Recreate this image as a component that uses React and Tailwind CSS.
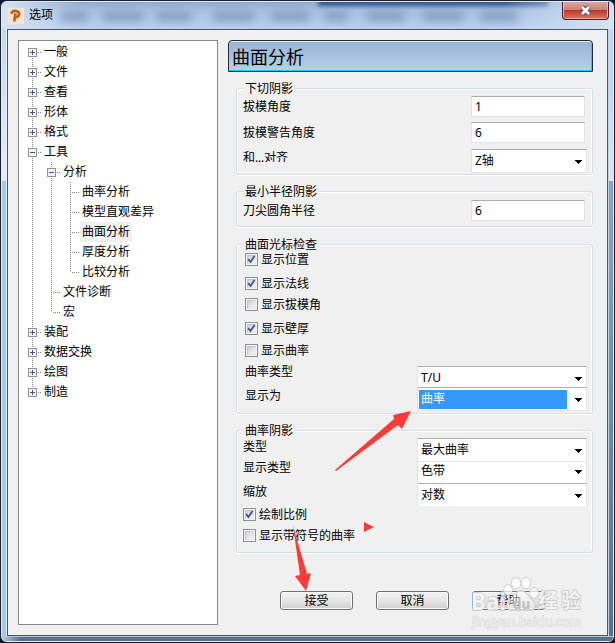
import React from "react";

function Group({ title, className, children }) {
  return (
    <section
      className={`ml-2 w-[357px] rounded-[3px] border border-[#d5dfe8] shadow-[inset_1px_1px_0_#fff,inset_-1px_0_0_#fff,0_1px_0_#fff] ${className}`}
    >
      <h2 className="-mt-2 ml-[6px] h-[15px] w-fit bg-[#f0f0f0] px-[2px] leading-[15px]">{title}</h2>
      {children}
    </section>
  );
}

function Label({ className, children }) {
  return <div className={`h-4 leading-4 ${className || ""}`}>{children}</div>;
}

function Field({ value, className }) {
  return (
    <div
      className={`flex h-[21px] w-[114px] shrink-0 items-center rounded-[1px] border border-[#e2e3ea] border-t-[#abadb3] bg-white pl-[3px] ${className || ""}`}
    >
      {value}
    </div>
  );
}

function Combo({ value, selected, className }) {
  return (
    <div
      className={`flex shrink-0 items-center justify-between border border-[#e2e3ea] border-t-[#abadb3] bg-white pr-1 ${className}`}
    >
      {selected ? (
        <span className="ml-px flex h-[19px] w-[148px] items-center bg-[#3399ff] pl-[2px] text-white">{value}</span>
      ) : (
        <span className="pl-[3px]">{value}</span>
      )}
      <svg width="7" height="4" className="mt-[2px] block" shapeRendering="crispEdges">
        <path d="M0 0h7v1h-1v1h-1v1h-1v1h-1v-1h-1v-1h-1v-1h-1z" fill="#000" />
      </svg>
    </div>
  );
}

function Check({ label, checked, className }) {
  return (
    <div className={`flex h-[13px] items-center gap-[3px] ${className || ""}`}>
      <span className="flex h-[13px] w-[13px] shrink-0 items-center justify-center border border-[#8e8f8f] bg-[#f4f4f4]">
        <span className="flex h-[9px] w-[9px] items-center justify-center border border-[#c3c6cb] border-r-[#e6e7ea] border-b-[#e6e7ea] bg-linear-to-br from-[#cdd1d7] to-[#f6f6f6]">
          {checked && (
            <svg width="9" height="9" viewBox="0 0 9 9" className="shrink-0">
              <path d="M1.2 4.2L3.5 7L7.6 1" fill="none" stroke="#40579b" strokeWidth="1.9" />
            </svg>
          )}
        </span>
      </span>
      <span className="leading-[13px]">{label}</span>
    </div>
  );
}

function Expander({ open }) {
  return (
    <svg width="9" height="9" className="relative block shrink-0" shapeRendering="crispEdges">
      <rect x="0.5" y="0.5" width="8" height="8" fill="#f5f5f5" stroke="#919191" />
      <path d="M2 4.5h5" stroke="#3c57a6" />
      {!open && <path d="M4.5 2v5" stroke="#3c57a6" />}
    </svg>
  );
}

const tree = [
  [0, "一般", "plus"],
  [0, "文件", "plus"],
  [0, "查看", "plus"],
  [0, "形体", "plus"],
  [0, "格式", "plus"],
  [0, "工具", "minus"],
  [1, "分析", "minus"],
  [2, "曲率分析"],
  [2, "模型直观差异"],
  [2, "曲面分析", "", true],
  [2, "厚度分析"],
  [2, "比较分析"],
  [1, "文件诊断"],
  [1, "宏"],
  [0, "装配", "plus"],
  [0, "数据交换", "plus"],
  [0, "绘图", "plus"],
  [0, "制造", "plus"],
];

/* Vertical guide spans (in rows' pixels) for each of the three tree levels. */
const guides = [
  { x: 13.5, y1: 11, y2: 350 },
  { x: 32.5, y1: 121, y2: 271 },
  { x: 51.5, y1: 141, y2: 231 },
];

const indents = ["pl-[9px]", "pl-[28px]", "pl-[47px]"];

function Tree() {
  return (
    <div className="relative h-[585px] w-[200px] shrink-0 border border-[#828790] bg-white pt-px">
      <svg className="absolute top-0 left-0 -ml-px -mt-px" width="80" height="380" shapeRendering="crispEdges">
        {guides.map((g) => (
          <path key={g.x} d={`M${g.x + 1} ${g.y1 + 1}V${g.y2 + 1}`} stroke="#808080" strokeDasharray="1 1" />
        ))}
      </svg>
      {tree.map(([level, name, mark, active]) => (
        <div key={name} className={`flex h-5 items-center ${indents[level]}`}>
          {mark ? <Expander open={mark === "minus"} /> : <span className="w-[5px] shrink-0" />}
          <svg width={mark ? 4 : 8} height="1" className="ml-px shrink-0" shapeRendering="crispEdges">
            <path d="M0 0.5H9" stroke="#808080" strokeDasharray="1 1" />
          </svg>
          <span className={`flex h-5 items-center px-[2px] pb-px ${active ? "bg-[#f0f0f0]" : ""}`}>{name}</span>
        </div>
      ))}
    </div>
  );
}

function Button({ children }) {
  return (
    <button className="flex h-[19px] w-[73px] items-center justify-center rounded-[3px] border border-[#707070] bg-linear-to-b from-[#f2f2f2] via-[#e6e6e6] via-50% to-[#cfcfcf] shadow-[inset_0_0_0_1px_#fafafa]">
      {children}
    </button>
  );
}

const smudges = [
  [58, 28], [100, 42], [154, 36], [211, 42], [268, 40], [322, 24], [364, 40], [420, 42], [478, 38],
];

function TitleBar() {
  return (
    <header className="relative flex h-[27px] shrink-0 items-center overflow-hidden rounded-t-[5px] bg-linear-to-b from-[#8fabd0] via-[#a6c0e2] via-30% to-[#b9d1ee]">
      <div className="absolute -top-1 left-[316px] h-[8px] w-[230px] bg-[#2f5796] blur-[2px]" />
      <div className="absolute top-0 left-0 h-full w-[80px] bg-linear-to-r from-[#d5e2f2] to-transparent" />
      <div className="absolute top-0 right-0 h-full w-[110px] bg-linear-to-l from-[#d5e2f2] to-transparent" />
      {smudges.map(([x, w]) => (
        <span
          key={x}
          className="absolute top-[10px] h-[9px] rounded-full bg-[#5b7296]/50 blur-[4px]"
          style={{ left: x, width: w }}
        />
      ))}
      <svg width="16" height="16" viewBox="0 0 16 16" className="relative ml-[6px] shrink-0">
        <rect width="16" height="16" fill="#fde3cb" />
        <path d="M3 5.6C4.5 3 7 2.6 9 3.2C12.2 4.2 11.8 9.2 7.6 9.3M7.6 5.4L6.2 13.5" fill="none" stroke="#b5601f" strokeWidth="2.6" />
      </svg>
      <h1 className="relative -mt-[2px] ml-[5px]">选项</h1>
      <div className="absolute -top-px right-[4px] flex h-[19px] w-[47px] items-center justify-center rounded-b-[4px] border border-t-0 border-[#4b1f25] bg-linear-to-b from-[#e0aaa2] via-[#d08478] via-45% to-[#d8715b] shadow-[inset_0_0_0_1px_#ffffff66]">
        <span className="absolute inset-x-px top-[9px] bottom-px bg-linear-to-b from-[#b93226] to-[#d4705a]" />
        <svg width="13" height="11" viewBox="0 0 13 11" className="relative mt-px">
          <path d="M3 2L10 9M10 2L3 9" stroke="#53596c" strokeWidth="4.6" />
          <path d="M3 2L10 9M10 2L3 9" stroke="#fff" strokeWidth="2.6" />
        </svg>
      </div>
    </header>
  );
}

function Watermark() {
  return (
    <svg className="pointer-events-none absolute top-[570px] left-[465px]" width="125" height="65">
      <g fill="#fff" fillOpacity="0.7" stroke="#c6c6c6" strokeOpacity="0.9" strokeWidth="1.4" paintOrder="stroke">
        <ellipse cx="43" cy="20" rx="4" ry="5" />
        <ellipse cx="51" cy="13" rx="4.5" ry="5.5" />
        <ellipse cx="61" cy="13" rx="4.5" ry="5.5" />
        <ellipse cx="69" cy="23" rx="4" ry="5" />
        <path d="M56 21C50 21 49 27 44 31C39 36 43 41 48 40H64C70 41 72 35 68 31C63 27 62 21 56 21Z" fillOpacity="0.45" />
        <text x="6" y="40" fontSize="24" fontWeight="bold" textLength="35" lengthAdjust="spacingAndGlyphs">Bai</text>
        <text x="73" y="38" fontSize="20" fontWeight="bold" textLength="43">经验</text>
        <text x="7" y="56" fontSize="12" strokeWidth="1" strokeOpacity="0.7" textLength="109" lengthAdjust="spacingAndGlyphs">jingyan.baidu.com</text>
      </g>
      <text x="48" y="39" fontSize="15" fontWeight="bold" fill="#bdbdbd" textLength="17" lengthAdjust="spacingAndGlyphs">du</text>
    </svg>
  );
}

export default function App() {
  return (
    <div className="relative h-[643px] w-[615px] overflow-hidden bg-[#101a2c] font-['Noto_Sans','Noto_Sans_CJK_SC',sans-serif] text-[12px] leading-4 text-black">
      <div className="flex h-[643px] w-[615px] flex-col rounded-[7px] border border-[#182230] bg-[#dce9f8] p-px">
        <TitleBar />
        <div className="flex h-[607px] shrink-0">
          <div className="w-[5px] shrink-0 border-r border-[#e8f1fa] bg-linear-to-b from-[#c5d8ef] via-[#e6edf6] via-25% to-[#a5c6e9] to-25%" />
          <main className="flex h-[607px] w-[601px] shrink-0 border border-[#4a5563] bg-[#f0f0f0] pt-[10px] pl-[10px]">
            <Tree />
            <div className="ml-[10px] flex w-[365px] flex-col">
              <div className="flex h-8 shrink-0 items-center rounded-t-[4px] border border-[#222b35] bg-linear-to-b from-[#98b3d1] to-[#b7d0ec] pt-px pl-[3px] text-[18px] shadow-[inset_0_1px_0_#dfe9f3,inset_-1px_-1px_0_#28c8ea]">
                曲面分析
              </div>

              <Group title="下切阴影" className="mt-4 h-[87px]">
                <div className="flex justify-between">
                  <div className="ml-[6px] mt-[3px]">
                    <Label>拔模角度</Label>
                    <Label className="mt-[10px]">拔模警告角度</Label>
                    <div className="mt-[9px] h-3 overflow-hidden leading-4">
                      和<span className="-tracking-[0.2px]">...</span>对齐
                    </div>
                  </div>
                  <div className="mr-[5px] w-[116px]">
                    <Field value="1" />
                    <Field value="6" className="mt-[5px]" />
                    <Combo value="Z轴" className="mt-[6px] h-[24px] w-[116px] pb-px" />
                  </div>
                </div>
              </Group>

              <Group title="最小半径阴影" className="mt-4 h-[36px]">
                <div className="flex justify-between">
                  <Label className="ml-[6px] mt-[4px]">刀尖圆角半径</Label>
                  <Field value="6" className="mr-[7px] mt-px" />
                </div>
              </Group>

              <Group title="曲面光标检查" className="mt-[17px] h-[170px]">
                <div className="ml-2 mt-px flex flex-col">
                  <Check label="显示位置" checked />
                  <Check label="显示法线" checked className="mt-[11px]" />
                  <Check label="显示拔模角" className="mt-2" />
                  <Check label="显示壁厚" checked className="mt-[11px]" />
                  <Check label="显示曲率" className="mt-[9px]" />
                </div>
                <div className="mt-[9px] flex justify-between">
                  <div className="ml-2 -mt-[2px]">
                    <Label>曲率类型</Label>
                    <Label className="mt-2">显示为</Label>
                  </div>
                  <div className="mr-[5px]">
                    <Combo value="T/U" className="h-[22px] w-[170px] border-b-0" />
                    <Combo value="曲率" selected className="-mt-px h-[24px] w-[170px]" />
                  </div>
                </div>
              </Group>

              <Group title="曲率阴影" className="mt-4 h-[123px]">
                <div className="flex justify-between">
                  <div className="ml-[6px] mt-px">
                    <Label>类型</Label>
                    <Label className="mt-[5px]">显示类型</Label>
                    <Label className="mt-2">缩放</Label>
                  </div>
                  <div className="mr-[5px]">
                    <Combo value="最大曲率" className="h-[24px] w-[170px]" />
                    <Combo value="色带" className="h-[21px] w-[170px] border-y-0 pb-[3px]" />
                    <Combo value="对数" className="h-[23px] w-[170px] border-b-0" />
                  </div>
                </div>
                <Check label="绘制比例" checked className="ml-[6px] mt-[2px]" />
                <Check label="显示带符号的曲率" className="ml-[6px] mt-2" />
              </Group>

              <div className="ml-[52px] mt-[38px] flex gap-[23px]">
                <Button>接受</Button>
                <Button>取消</Button>
                <Button>帮助</Button>
              </div>
            </div>
          </main>
          <div className="w-[5px] shrink-0 border-l border-[#c4d2e2] bg-linear-to-b from-[#c5d8ef] from-10% via-[#dfe6ee] via-25% to-[#8ba6c5] to-25%">
            <div className="mt-[152px] h-[455px] bg-linear-to-b from-[#8ba6c5] to-[#5a7189]" />
          </div>
        </div>
        <div className="h-[5px] shrink-0 rounded-b-[4px] border-t border-[#b5c3d2] bg-linear-to-r from-[#b4d0ee] via-[#5b7189] via-3% to-[#5b7189]" />
      </div>

      <svg className="pointer-events-none absolute top-0 left-0" width="615" height="643">
        <g fill="#ff3b38">
          <path d="M335 470L394 419L393 415L411 411L402 429L398 425L336 471Z" />
          <path d="M293 526L307 574L311 573L306 591L295 576L300 575Z" />
          <path d="M364 522L374 527L364 532Z" />
        </g>
      </svg>
      <Watermark />
    </div>
  );
}
